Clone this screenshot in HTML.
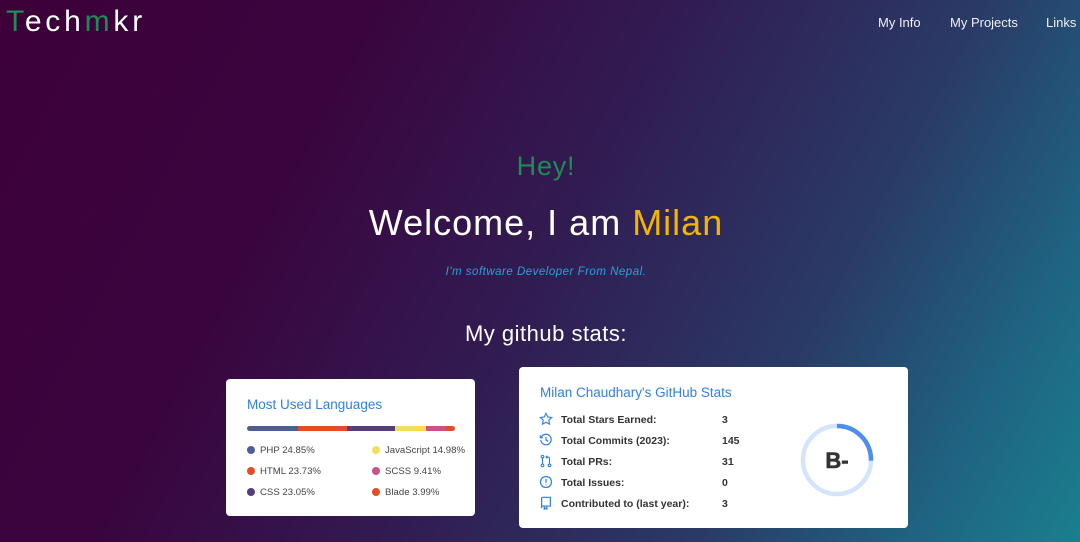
<!DOCTYPE html>
<html><head><meta charset="utf-8"><style>
*{margin:0;padding:0;box-sizing:border-box}
body{width:1080px;height:542px;overflow:hidden;font-family:"Liberation Sans",sans-serif;
background:linear-gradient(118deg,#3d0039 0%,#3a053f 28%,#311c52 50%,#2a3a66 72%,#1f6482 88%,#1a7f8e 100%);position:relative;color:#fff}
.logo{position:absolute;left:6px;top:5px;font-size:30px;letter-spacing:3.8px;color:#fff}
.g{color:#1e8c55}
.nav{position:absolute;top:15px;font-size:13px;color:#f0f0f5}
.c{position:absolute;left:6px;width:1080px;text-align:center}
.card{position:absolute;background:#fff;border-radius:4px;color:#333}
.t{color:#2f80ed;font-size:13.5px;position:absolute}
.li{position:absolute;font-size:9.6px;color:#444}
.dot{display:inline-block;width:8px;height:8px;border-radius:50%;margin-right:5px;vertical-align:-1px}
.row{position:absolute;left:20px;font-size:10.5px;font-weight:bold;color:#333}
.row .v{position:absolute;left:183px}
.row svg{position:absolute;left:0;top:-2px}
.row span.l{position:absolute;left:22px;white-space:nowrap}
</style></head><body>
<div class="logo"><span class="g">T</span>ech<span class="g">m</span>kr</div>
<div class="nav" style="left:878px">My Info</div>
<div class="nav" style="left:950px">My Projects</div>
<div class="nav" style="left:1046px">Links</div>
<div class="c" style="top:151px;font-size:27px;letter-spacing:0.8px;color:#1e8c55">Hey!</div>
<div class="c" style="top:202px;font-size:36px;letter-spacing:1px">Welcome, I am <span style="color:#f4b400">Milan</span></div>
<div class="c" style="top:266px;font-size:11.5px;letter-spacing:0.5px;font-style:italic;color:#1fa7d6">I'm software Developer From Nepal.</div>
<div class="c" style="top:321px;font-size:22px;letter-spacing:0.5px">My github stats:</div>

<div class="card" style="left:226px;top:379px;width:249px;height:137px">
<div class="t" style="left:21px;top:18px">Most Used Languages</div>
<div style="position:absolute;left:21px;top:47px;width:208px;height:5px;border-radius:3px;overflow:hidden;display:flex">
<div style="width:51px;background:#4f5d95"></div><div style="width:49px;background:#e34c26"></div><div style="width:48px;background:#563d7c"></div><div style="width:31px;background:#f1e05a"></div><div style="width:20px;background:#c6538c"></div><div style="flex:1;background:#e34c26"></div></div>
<div class="li" style="left:21px;top:66px"><span class="dot" style="background:#4f5d95"></span>PHP 24.85%</div>
<div class="li" style="left:146px;top:66px"><span class="dot" style="background:#f1e05a"></span>JavaScript 14.98%</div>
<div class="li" style="left:21px;top:87px"><span class="dot" style="background:#e34c26"></span>HTML 23.73%</div>
<div class="li" style="left:146px;top:87px"><span class="dot" style="background:#c6538c"></span>SCSS 9.41%</div>
<div class="li" style="left:21px;top:108px"><span class="dot" style="background:#563d7c"></span>CSS 23.05%</div>
<div class="li" style="left:146px;top:108px"><span class="dot" style="background:#e34c26"></span>Blade 3.99%</div>
</div>

<div class="card" style="left:519px;top:367px;width:389px;height:161px">
<div class="t" style="left:21px;top:18px">Milan Chaudhary's GitHub Stats</div>
<div class="row" style="top:47px"><svg width="14" height="14" viewBox="0 0 16 16" fill="none" stroke="#2f80ed" stroke-width="1.3"><path d="M8 1.5l2 4.2 4.5.6-3.3 3.1.8 4.5L8 11.7l-4 2.2.8-4.5L1.5 6.3 6 5.7z"/></svg><span class="l">Total Stars Earned:</span><span class="v">3</span></div>
<div class="row" style="top:68px"><svg width="14" height="14" viewBox="0 0 16 16" fill="none" stroke="#2f80ed" stroke-width="1.4"><path d="M2.5 5A6 6 0 1 1 2 8M1.5 2.5V5.5h3M8 4.5V8l2.5 1.5"/></svg><span class="l">Total Commits (2023):</span><span class="v">145</span></div>
<div class="row" style="top:89px"><svg width="14" height="14" viewBox="0 0 16 16" fill="none" stroke="#2f80ed" stroke-width="1.3"><circle cx="4" cy="3" r="1.5"/><circle cx="4" cy="13" r="1.5"/><circle cx="12" cy="13" r="1.5"/><path d="M4 4.5v7M12 11.5V5.5a2 2 0 0 0-2-2H8M9.5 2L8 3.5 9.5 5"/></svg><span class="l">Total PRs:</span><span class="v">31</span></div>
<div class="row" style="top:110px"><svg width="14" height="14" viewBox="0 0 16 16" fill="none" stroke="#2f80ed" stroke-width="1.4"><circle cx="8" cy="8" r="6.3"/><path d="M8 4.5v4.5M8 10.8v.8"/></svg><span class="l">Total Issues:</span><span class="v">0</span></div>
<div class="row" style="top:131px"><svg width="14" height="14" viewBox="0 0 16 16" fill="none" stroke="#2f80ed" stroke-width="1.4"><path d="M3 14V2.5A1 1 0 0 1 4 1.5h9v10H4a1 1 0 0 0-1 1M6 12v3l1.5-1 1.5 1v-3"/></svg><span class="l">Contributed to (last year):</span><span class="v">3</span></div>
<svg style="position:absolute;left:280px;top:55px" width="76" height="76" viewBox="0 0 76 76"><circle cx="38" cy="38" r="34" fill="none" stroke="#d4e4fb" stroke-width="4.5"/><circle cx="38" cy="38" r="34" fill="none" stroke="#4d8eee" stroke-width="4.5" stroke-dasharray="54 300" transform="rotate(-90 38 38)"/><text x="38" y="46" text-anchor="middle" font-family="Liberation Sans" font-weight="bold" font-size="22" fill="#333" stroke="#333" stroke-width="0.6">B-</text></svg>
</div>
</body></html>
